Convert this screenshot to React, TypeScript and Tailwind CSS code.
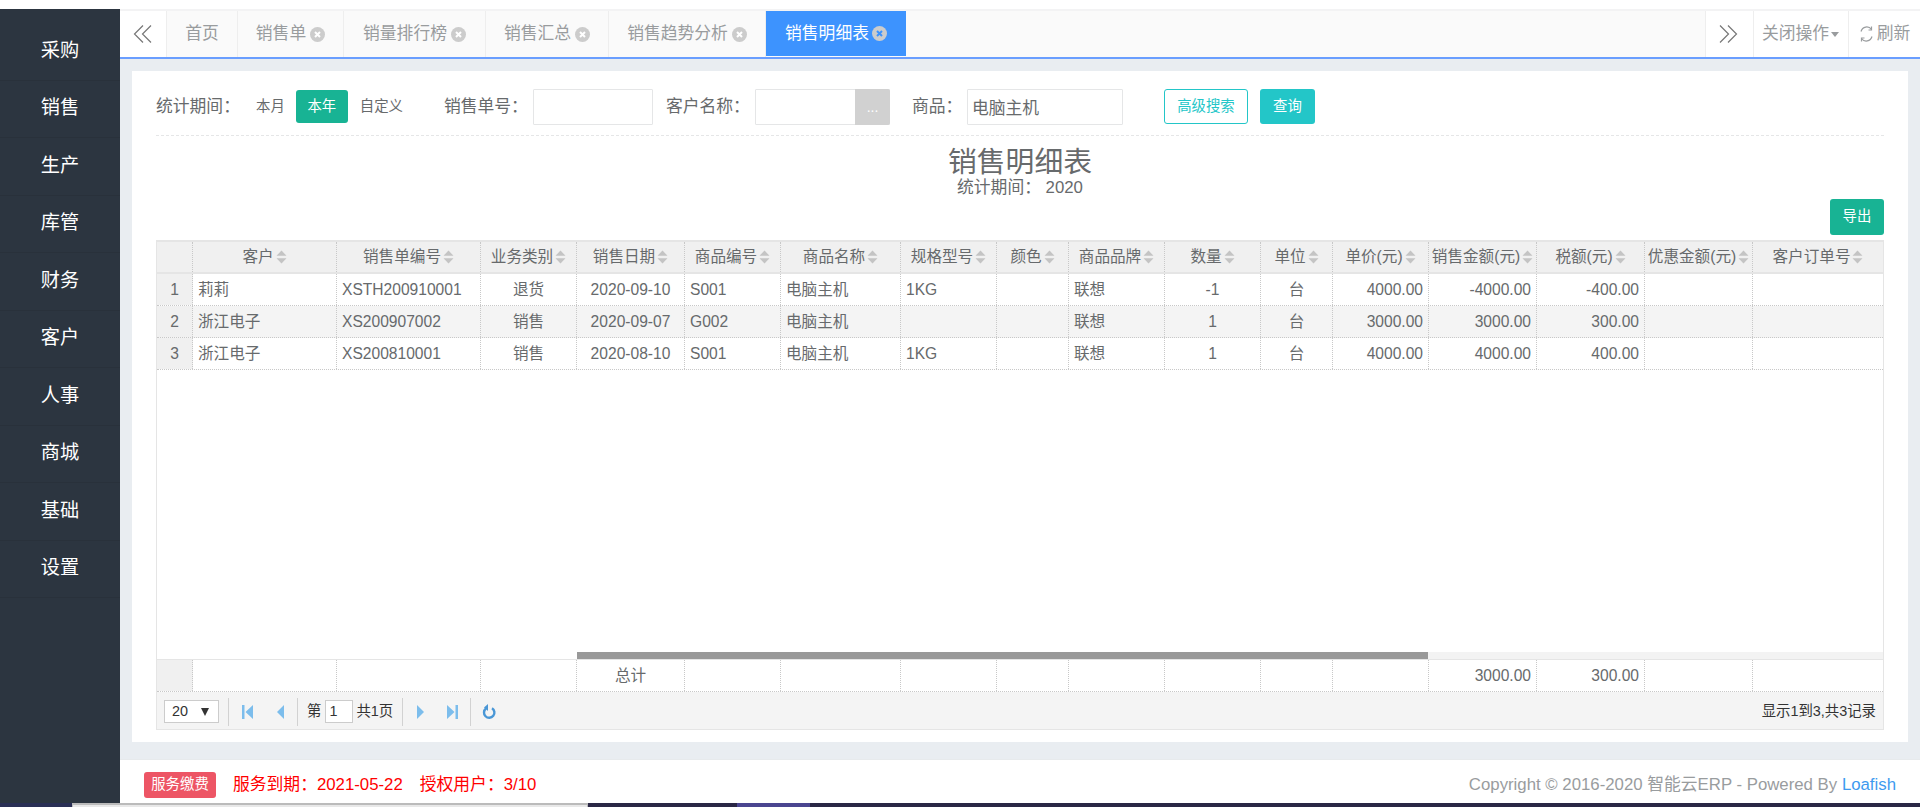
const rowsGrid = "grid grid-cols-[36px_144px_144px_96px_108px_96px_120px_96px_72px_96px_96px_72px_96px_108px_108px_108px_130px]";

const headers = ["客户","销售单编号","业务类别","销售日期","商品编号","商品名称","规格型号","颜色","商品品牌","数量","单位","单价(元)","销售金额(元)","税额(元)","优惠金额(元)","客户订单号"];
const aligns = ["l","l","c","c","l","l","l","l","l","c","c","r","r","r","r","r"];
const rows = [
  ["莉莉","XSTH200910001","退货","2020-09-10","S001","电脑主机","1KG","","联想","-1","台","4000.00","-4000.00","-400.00","",""],
  ["浙江电子","XS200907002","销售","2020-09-07","G002","电脑主机","","","联想","1","台","3000.00","3000.00","300.00","",""],
  ["浙江电子","XS200810001","销售","2020-08-10","S001","电脑主机","1KG","","联想","1","台","4000.00","4000.00","400.00","",""],
];
const totals = ["","","","总计","","","","","","","","","3000.00","300.00","",""];
const side = ["采购","销售","生产","库管","财务","客户","人事","商城","基础","设置"];
const tabs = [
  { t: "销售单", w: "w-[106px]" },
  { t: "销量排行榜", w: "w-[142px]" },
  { t: "销售汇总", w: "w-[123px]" },
  { t: "销售趋势分析", w: "w-[157px]" },
];

function Sort() {
  return (
    <svg width="11" height="14" viewBox="0 0 11 14" className="shrink-0 ml-[2px]">
      <path d="M5.5 0.5 L10.5 5.8 H0.5 Z" fill="#c4c4c4" />
      <path d="M5.5 13.5 L10.5 8.2 H0.5 Z" fill="#c4c4c4" />
    </svg>
  );
}

function CloseDot({ active }: { active?: boolean }) {
  return (
    <svg width="15" height="15" viewBox="0 0 15 15" className="shrink-0">
      <circle cx="7.5" cy="7.5" r="7.5" fill="#cccccc" />
      <path d="M5 5 L10 10 M10 5 L5 10" stroke={active ? "#3d93fe" : "#ffffff"} strokeWidth="2" />
    </svg>
  );
}

function Double({ dir }: { dir: "l" | "r" }) {
  return (
    <svg width="20" height="20" viewBox="0 0 20 20" fill="none" stroke="#777777" strokeWidth="1.2">
      {dir === "l" ? (
        <>
          <path d="M10 1.5 L1.5 10 L10 18.5" />
          <path d="M18 1.5 L9.5 10 L18 18.5" />
        </>
      ) : (
        <>
          <path d="M2 1.5 L10.5 10 L2 18.5" />
          <path d="M10 1.5 L18.5 10 L10 18.5" />
        </>
      )}
    </svg>
  );
}

function Cell({ v, a }: { v: string; a: string }) {
  return (
    <div
      className={
        "border-r border-dotted border-[#c8c8c8] last:border-r-0 px-[5px] flex items-center overflow-hidden whitespace-nowrap " +
        (a === "c" ? "justify-center" : a === "r" ? "justify-end" : "justify-start")
      }
    >
      {v}
    </div>
  );
}

function Sep() {
  return <div className="w-[1px] h-[28px] bg-[#d2d2d2] shrink-0" />;
}

function PagerIcon({ d, className }: { d: string; className: string }) {
  return (
    <svg width="12" height="14" viewBox="0 0 12 14" className={className}>
      <path d={d} fill="#7cbdec" />
    </svg>
  );
}

export default function App() {
  return (
    <div className="w-[1920px] h-[807px] overflow-hidden bg-white flex flex-col text-[#676a6c] font-['Liberation_Sans','Noto_Sans_CJK_SC',sans-serif]">
      <div className="h-[9px] bg-white shrink-0" />
      <div className="flex h-[794px] shrink-0">
        <aside className="w-[120px] shrink-0 bg-[#2c3540] pt-[14px]">
          {side.map((s) => (
            <div key={s} className="h-[57.5px] flex items-center justify-center border-b border-[#29313b] text-white text-[19.2px]">
              {s}
            </div>
          ))}
        </aside>
        <main className="flex-1 flex flex-col min-w-0 bg-[#e9edf1]">
          <div className="h-[50px] shrink-0 flex bg-[#fafafa] border-t-2 border-b-2 border-t-[#f3f3f4] border-b-[#6a9eff] text-[16.8px] text-[#999c9e]">
            <div className="w-[47px] bg-white border-r border-[#eeeeee] flex items-center justify-center">
              <Double dir="l" />
            </div>
            <div className="w-[71px] border-r border-[#eeeeee] flex items-center justify-center">首页</div>
            {tabs.map((t) => (
              <div key={t.t} className={t.w + " border-r border-[#eeeeee] flex items-center justify-center gap-[4px]"}>
                <span>{t.t}</span>
                <CloseDot />
              </div>
            ))}
            <div className="w-[140px] h-[45px] bg-[#3d93fe] text-white flex items-center justify-center gap-[3px]">
              <span>销售明细表</span>
              <CloseDot active />
            </div>
            <div className="flex-1" />
            <div className="w-[48px] border-l border-[#eeeeee] flex items-center justify-center pr-[3px] bg-white">
              <Double dir="r" />
            </div>
            <div className="w-[95px] border-l border-[#eeeeee] flex items-center justify-center gap-[2px] pr-[1px] bg-white">
              <span>关闭操作</span>
              <svg width="8" height="5" viewBox="0 0 8 5"><path d="M0 0 H8 L4 5 Z" fill="#999c9e" /></svg>
            </div>
            <div className="w-[72px] border-l border-[#eeeeee] flex items-center justify-center gap-[3px] bg-white">
              <svg width="15" height="18" viewBox="0 0 15 18" fill="none" stroke="#999c9e" strokeWidth="1.2">
                <path d="M12.5 4.5 A6 6.5 0 0 0 2 6.5" />
                <path d="M2.5 13.5 A6 6.5 0 0 0 13 11.5" />
                <path d="M12.5 1.5 V5 H9.5" />
                <path d="M2.5 16.5 V13 H5.5" />
              </svg>
              <span>刷新</span>
            </div>
          </div>

          <div className="mt-[12px] ml-[12px] mr-[12px] h-[671px] bg-white shrink-0 px-[24px] flex flex-col">
            <div className="h-[65px] shrink-0 flex items-start pt-[18px] border-b border-dashed border-[#e5e6e7]">
              <div className="h-[36px] flex items-center w-[100px] text-[16.8px] whitespace-nowrap">统计期间：</div>
              <div className="h-[36px] flex items-center text-[14.4px] whitespace-nowrap">本月</div>
              <div className="ml-[11px] mt-[1px] w-[52px] h-[33px] rounded-[3px] bg-[#18b394] text-white text-[14.4px] flex items-center justify-center">本年</div>
              <div className="ml-[12px] h-[36px] flex items-center text-[14.4px] whitespace-nowrap">自定义</div>
              <div className="ml-[41px] h-[36px] flex items-center w-[89px] text-[16.8px] whitespace-nowrap">销售单号：</div>
              <div className="w-[120px] h-[36px] border border-[#e5e6e7] rounded-[1px]" />
              <div className="ml-[13px] h-[36px] flex items-center w-[89px] text-[16.8px] whitespace-nowrap">客户名称：</div>
              <div className="w-[135px] h-[36px] border border-[#e5e6e7] rounded-[1px] flex justify-end">
                <div className="w-[35px] -my-[1px] -mr-[1px] bg-[#d1d1d1] rounded-r-[2px] text-white text-[14px] flex items-center justify-center">...</div>
              </div>
              <div className="ml-[22px] h-[36px] flex items-center w-[55px] text-[16.8px] whitespace-nowrap">商品：</div>
              <div className="w-[156px] h-[36px] border border-[#e5e6e7] rounded-[1px] pl-[4px] pt-[3px] flex items-center text-[16.8px]">电脑主机</div>
              <div className="ml-[41px] w-[84px] h-[35px] rounded-[3px] border border-[#23c6c8] text-[#23c6c8] text-[14.4px] flex items-center justify-center">高级搜索</div>
              <div className="ml-[12px] w-[55px] h-[35px] rounded-[3px] bg-[#23c6c8] text-white text-[14.4px] flex items-center justify-center">查询</div>
            </div>

            <div className="flex flex-col items-center shrink-0 h-[46px] pt-[7px]">
              <div className="text-[28.8px] leading-[38px] text-[#676a6c] h-[35px]">销售明细表</div>
              <div className="text-[16.8px] leading-[20px] whitespace-pre">统计期间： 2020</div>
            </div>
            <div className="flex justify-end shrink-0 h-[36px] mt-[17px]">
              <div className="w-[54px] h-[36px] rounded-[3px] bg-[#18b394] text-white text-[14.4px] flex items-center justify-center">导出</div>
            </div>

            <div className="mt-[5px] flex-1 flex flex-col border border-[#e5e5e5] border-t-2 mb-[12px] text-[15.6px] min-h-0">
              <div className={rowsGrid + " h-[32px] shrink-0 bg-[#f0f0f0] border-b-2 border-[#e5e5e5]"}>
                <div className="border-r border-dotted border-[#c8c8c8]" />
                {headers.map((h) => (
                  <div key={h} className="border-r border-dotted border-[#c8c8c8] last:border-r-0 flex items-center justify-center overflow-hidden whitespace-nowrap">
                    <span>{h}</span>
                    <Sort />
                  </div>
                ))}
              </div>
              {rows.map((r, i) => (
                <div key={i} className={rowsGrid + " h-[32px] shrink-0 border-b border-dotted border-[#c8c8c8] " + (i === 1 ? "bg-[#f4f4f4]" : "bg-white")}>
                  <div className="bg-[#f0f0f0] border-r border-dotted border-[#c8c8c8] flex items-center justify-center">{i + 1}</div>
                  {r.map((v, j) => <Cell key={j} v={v} a={aligns[j]} />)}
                </div>
              ))}
              <div className="flex-1" />
              <div className="h-[8px] shrink-0 flex border-b border-[#e5e5e5]">
                <div className="w-[420px] bg-white" />
                <div className="w-[851px] bg-[#999999]" />
                <div className="flex-1 bg-[#f3f3f3]" />
              </div>
              <div className={rowsGrid + " h-[32px] shrink-0 border-b border-dotted border-[#c8c8c8]"}>
                <div className="bg-[#f0f0f0] border-r border-dotted border-[#c8c8c8]" />
                {totals.map((v, j) => <Cell key={j} v={v} a={j === 3 ? "c" : "r"} />)}
              </div>
              <div className="h-[37px] shrink-0 bg-[#f4f4f4] flex items-center text-[14.4px] text-[#333333] pl-[7px] pr-[7px] pt-[2px]">
                <div className="w-[55px] h-[23px] bg-white border border-[#cccccc] flex items-center justify-between pl-[7px] pr-[9px]">
                  <span>20</span>
                  <svg width="8" height="8" viewBox="0 0 8 8"><path d="M0 0 H8 L4 8 Z" fill="#333333" /></svg>
                </div>
                <div className="w-[9px] shrink-0" />
                <Sep />
                <PagerIcon className="ml-[13px]" d="M0 0 H2.5 V14 H0 Z M11 0 V14 L3.5 7 Z" />
                <PagerIcon className="ml-[21px]" d="M9 0 V14 L2 7 Z" />
                <div className="w-[10px] shrink-0" />
                <Sep />
                <span className="ml-[9px]">第</span>
                <div className="ml-[4px] w-[28px] h-[23px] bg-white border border-[#cccccc] flex items-center pl-[3px]">1</div>
                <span className="ml-[3px] whitespace-nowrap">共1页</span>
                <div className="w-[9px] shrink-0" />
                <Sep />
                <PagerIcon className="ml-[12px]" d="M2 0 L9 7 L2 14 Z" />
                <PagerIcon className="ml-[20px]" d="M0 0 L7.5 7 L0 14 Z M8.5 0 H11 V14 H8.5 Z" />
                <div className="w-[11px] shrink-0" />
                <Sep />
                <svg width="15" height="16" viewBox="0 0 15 16" fill="none" className="ml-[11px]">
                  <path d="M4 4.5 A5.2 5.2 0 1 0 10 4.2" stroke="#4a97d6" strokeWidth="2.4" />
                  <path d="M6 0 V7 L2 3.5 Z" fill="#4a97d6" />
                </svg>
                <div className="flex-1" />
                <span className="whitespace-nowrap">显示1到3,共3记录</span>
              </div>
            </div>
          </div>

          <div className="mt-[17px] flex-1 bg-white border-t border-[#e7eaec] flex items-center px-[24px] pt-[6px] text-[16.8px]">
            <div className="w-[72px] h-[26px] rounded-[3px] bg-[#ed5565] text-white text-[14.4px] flex items-center justify-center">服务缴费</div>
            <span className="ml-[17px] text-[#ff0000] whitespace-nowrap">服务到期：2021-05-22</span>
            <span className="ml-[17px] text-[#ff0000] whitespace-nowrap">授权用户：3/10</span>
            <div className="flex-1" />
            <span className="text-[#999c9e]">Copyright © 2016-2020 智能云ERP - Powered By <span className="text-[#3d9aef]">Loafish</span></span>
          </div>
        </main>
      </div>
      <div className="h-[4px] shrink-0 flex bg-[#2a2745]">
        <div className="w-[72px] bg-[#2a2f55]" />
        <div className="w-[516px] bg-[#e8e8e8] border-t-2 border-x border-[#bbbbbb]" />
        <div className="w-[149px]" />
        <div className="w-[73px] bg-[#4a4590]" />
      </div>
    </div>
  );
}
